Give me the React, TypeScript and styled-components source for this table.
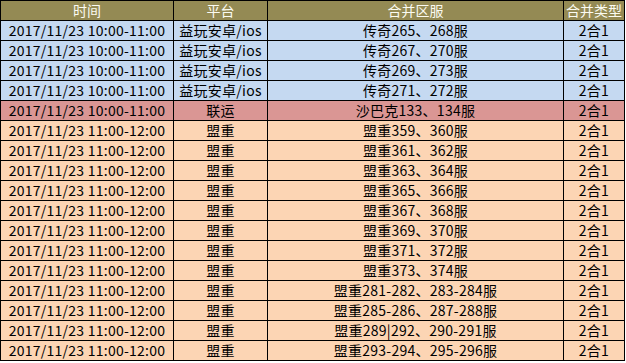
import React from "react";
import styled, { createGlobalStyle } from "styled-components";

const Global = createGlobalStyle`
  html, body { margin: 0; padding: 0; background: #ffffff; }
  body { font-family: "Noto Sans CJK SC", "Noto Sans", sans-serif; }
`;

const Grid = styled.div`
  display: grid;
  grid-template-columns: 173px 94px 296px 61px;
  width: 625px;
  border-left: 1px solid #000;
  border-top: 1px solid #000;
  box-sizing: border-box;
`;

type Tone = "head" | "blue" | "red" | "orange";

const bg: Record<Tone, string> = {
  head: "#948a54",
  blue: "#c5d9f1",
  red: "#da9694",
  orange: "#fcd5b4",
};

const Cell = styled.div<{ $tone: Tone }>`
  box-sizing: border-box;
  height: 20px;
  border-right: 1px solid #000;
  border-bottom: 1px solid #000;
  background: ${(p) => bg[p.$tone]};
  color: ${(p) => (p.$tone === "head" ? "#fbfbf2" : "#000000")};
  font-size: 14px;
  line-height: 19px;
  letter-spacing: ${(p) => (p.$tone === "head" ? "0" : "0.25px")};
  text-align: center;
  white-space: nowrap;
  overflow: hidden;
`;

type Row = [string, string, string, string, Tone];

const rows: Row[] = [
  ["2017/11/23 10:00-11:00", "益玩安卓/ios", "传奇265、268服", "2合1", "blue"],
  ["2017/11/23 10:00-11:00", "益玩安卓/ios", "传奇267、270服", "2合1", "blue"],
  ["2017/11/23 10:00-11:00", "益玩安卓/ios", "传奇269、273服", "2合1", "blue"],
  ["2017/11/23 10:00-11:00", "益玩安卓/ios", "传奇271、272服", "2合1", "blue"],
  ["2017/11/23 10:00-11:00", "联运", "沙巴克133、134服", "2合1", "red"],
  ["2017/11/23 11:00-12:00", "盟重", "盟重359、360服", "2合1", "orange"],
  ["2017/11/23 11:00-12:00", "盟重", "盟重361、362服", "2合1", "orange"],
  ["2017/11/23 11:00-12:00", "盟重", "盟重363、364服", "2合1", "orange"],
  ["2017/11/23 11:00-12:00", "盟重", "盟重365、366服", "2合1", "orange"],
  ["2017/11/23 11:00-12:00", "盟重", "盟重367、368服", "2合1", "orange"],
  ["2017/11/23 11:00-12:00", "盟重", "盟重369、370服", "2合1", "orange"],
  ["2017/11/23 11:00-12:00", "盟重", "盟重371、372服", "2合1", "orange"],
  ["2017/11/23 11:00-12:00", "盟重", "盟重373、374服", "2合1", "orange"],
  ["2017/11/23 11:00-12:00", "盟重", "盟重281-282、283-284服", "2合1", "orange"],
  ["2017/11/23 11:00-12:00", "盟重", "盟重285-286、287-288服", "2合1", "orange"],
  ["2017/11/23 11:00-12:00", "盟重", "盟重289|292、290-291服", "2合1", "orange"],
  ["2017/11/23 11:00-12:00", "盟重", "盟重293-294、295-296服", "2合1", "orange"],
];

const header = ["时间", "平台", "合并区服", "合并类型"];

export default function App() {
  return (
    <>
      <Global />
      <Grid>
        {header.map((h) => (
          <Cell key={h} $tone="head">
            {h}
          </Cell>
        ))}
        {rows.map((r, i) =>
          r.slice(0, 4).map((t, j) => (
            <Cell key={`${i}-${j}`} $tone={r[4]}>
              {t}
            </Cell>
          ))
        )}
      </Grid>
    </>
  );
}
